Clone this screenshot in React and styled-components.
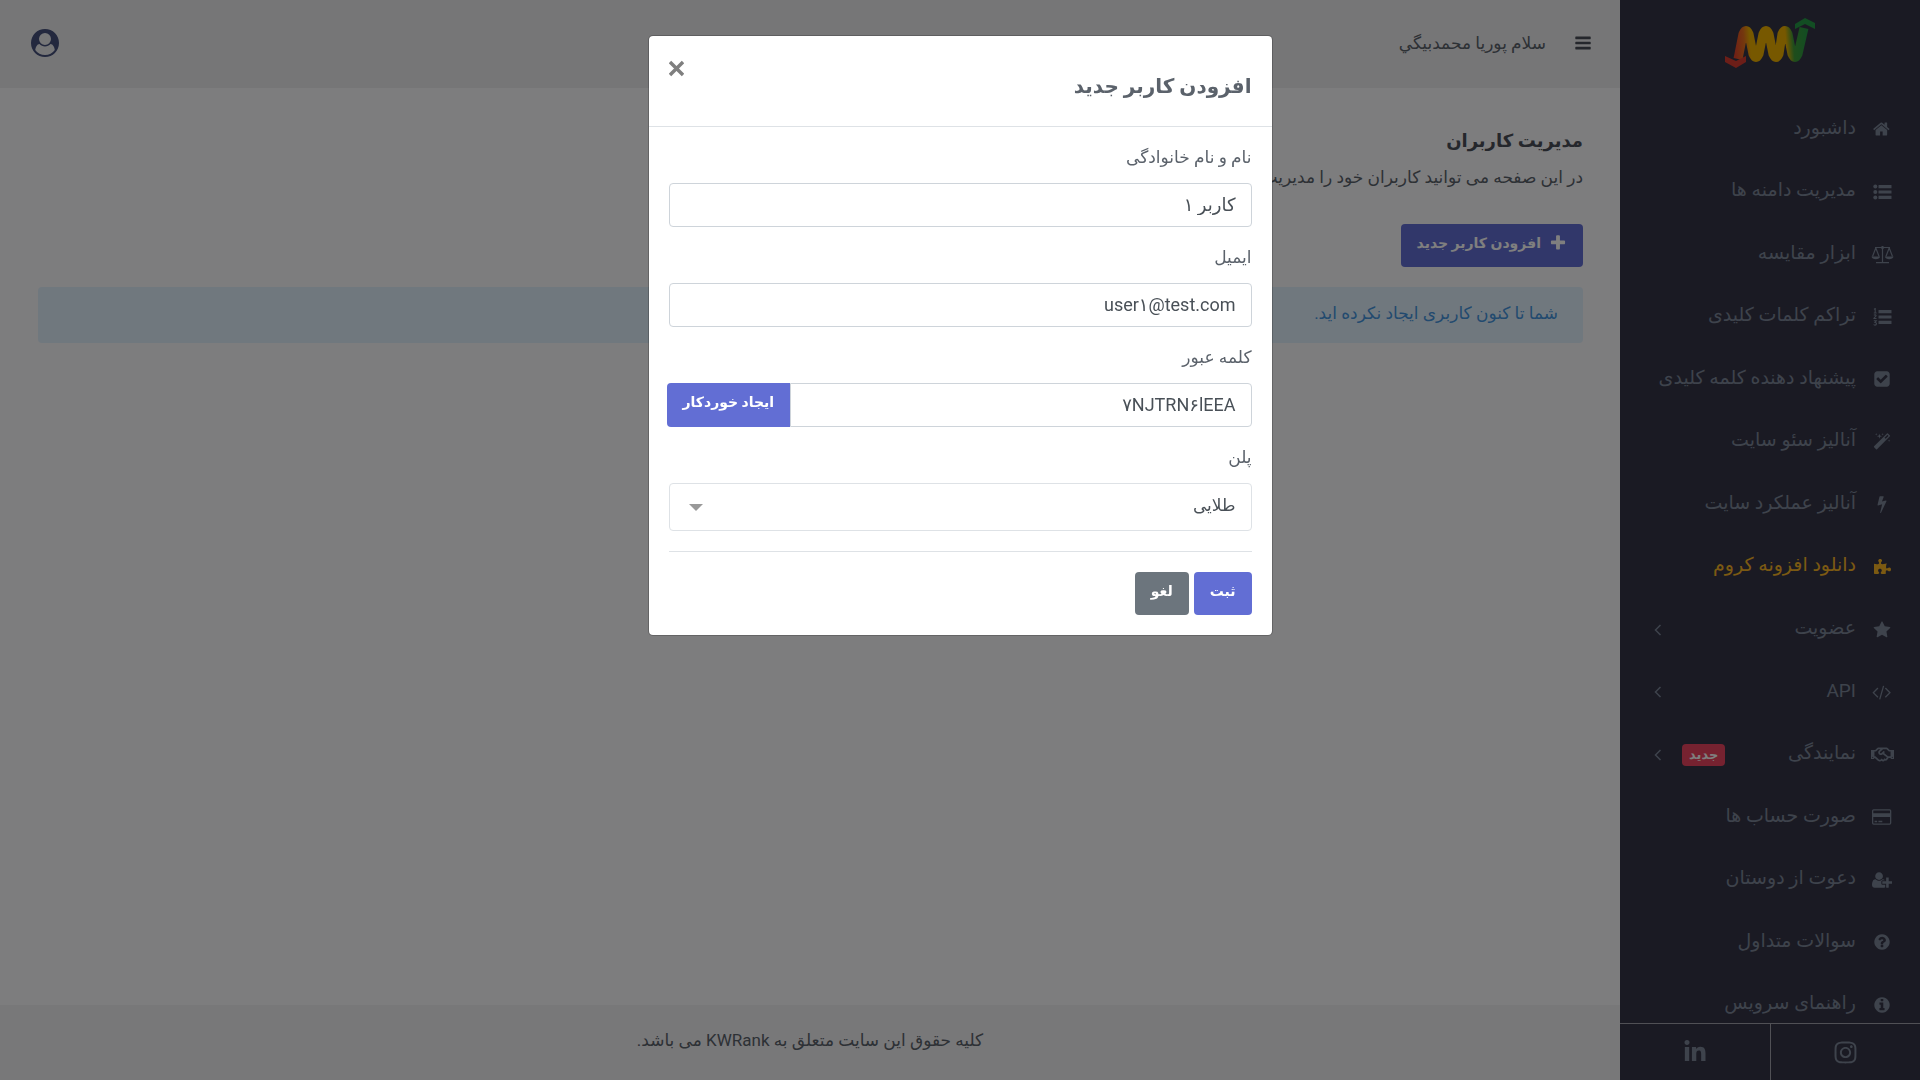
import React, { useState } from 'react'
import styled, { createGlobalStyle } from 'styled-components'
import { FaPuzzlePiece, FaRegHandshake, FaLinkedinIn, FaInstagram } from 'react-icons/fa'

const GlobalStyle = createGlobalStyle`
    * {
        box-sizing: border-box;
    }
    body {
        margin: 0;
        background-color: #fafafd;
        color: #5b626b;
        font-family: Roboto, "DejaVu Sans", sans-serif;
        font-size: 17px;
    }
    input, select, button {
        font-family: inherit;
    }
`;

const Page = styled.div`
    display: flex;
    height: 100vh;
    overflow: hidden;
`;

/* sidebar */
const Sidebar = styled.aside`
    width: 300px;
    flex-shrink: 0;
    display: flex;
    flex-direction: column;
    background-color: #353547;
`;
const LogoLink = styled.a`
    display: flex;
    justify-content: center;
    padding: 16px 0 28px;
`;
const Nav = styled.nav`
    flex: 1;
    min-height: 0;
    overflow: hidden;
`;
const Menu = styled.ul`
    list-style: none;
    margin: 0;
    padding: 0;
    height: 938px;
    display: grid;
    grid-auto-rows: 1fr;
`;
const MenuLink = styled.a`
    display: flex;
    align-items: center;
    height: 100%;
    padding: 0 25px 0 32px;
    font-size: 19px;
    text-decoration: none;
    color: ${(props) => props.$highlight ? "#f8b425" : "#7c8698"};
`;
const MenuText = styled.span`
    padding-bottom: 4px;
`;
const IconSlot = styled.span`
    width: 26px;
    margin-left: 13px;
    display: flex;
    justify-content: center;
`;
const Arrow = styled.svg`
    margin-right: auto;
`;
const Badge = styled.span`
    margin-right: auto;
    padding: 0 7px;
    border-radius: 4px;
    background-color: #ec4561;
    color: white;
    font-size: 13px;
    font-weight: bold;
    line-height: 22px;

    & + svg {
        margin-right: 18px;
    }
`;
const Social = styled.div`
    display: flex;
    height: 57px;
    border-top: 1px solid #a0a0aa;
`;
const SocialLink = styled.a`
    flex: 1;
    display: flex;
    align-items: center;
    justify-content: center;
    color: #7c8698;

    & + & {
        border-right: 1px solid #a0a0aa;
    }
`;

/* content */
const Main = styled.main`
    flex: 1;
    min-width: 0;
    display: flex;
    flex-direction: column;
`;
const Topbar = styled.header`
    height: 88px;
    padding: 0 28px 3px 31px;
    display: flex;
    align-items: center;
    background-color: #ececef;
`;
const IconButton = styled.button`
    display: flex;
    padding: 0;
    border: none;
    background: none;
    color: ${(props) => props.$color};
    cursor: pointer;
`;
const Greeting = styled.span`
    margin-right: 28px;
    margin-left: auto;
    color: #5b626b;
`;
const Content = styled.section`
    flex: 1;
    padding: 35px 37px 35px 38px;
`;
const Title = styled.h1`
    margin: 0;
    font-size: 18px;
    line-height: 36px;
    color: #4b4f58;
`;
const Description = styled.p`
    margin: 0 0 29px;
    line-height: 36px;
`;
const Button = styled.button`
    height: 43px;
    padding: 0 16px 6px;
    border: none;
    border-radius: 4px;
    background-color: ${(props) => props.$secondary ? "#6c757d" : "#626ed4"};
    color: white;
    font-size: 14px;
    font-weight: bold;
    display: flex;
    align-items: center;
    justify-content: center;
    gap: 8px;
    cursor: pointer;
`;
const Alert = styled.div`
    margin-top: 20px;
    padding: 0 25px 4px;
    border-radius: 4px;
    background-color: #e1f0fd;
    color: #4595de;
    line-height: 52px;
`;
const Footer = styled.footer`
    height: 75px;
    line-height: 70px;
    text-align: center;
    background-color: #f0f0f3;
`;

/* modal */
const Backdrop = styled.div`
    position: fixed;
    inset: 0;
    padding: 35px 0;
    display: flex;
    justify-content: center;
    align-items: flex-start;
    background-color: rgba(0, 0, 0, 0.5);
`;
const Modal = styled.div`
    width: 625px;
    border: 1px solid rgba(0, 0, 0, 0.2);
    border-radius: 5px;
    background-color: white;
    background-clip: padding-box;
`;
const ModalHeader = styled.div`
    display: flex;
    align-items: flex-start;
    justify-content: space-between;
    padding: 24px 20px 22px;
    border-bottom: 1px solid #dee2e6;
`;
const ModalTitle = styled.h2`
    margin: 8px 0 0;
    font-size: 20px;
    line-height: 36px;
`;
const ModalBody = styled.form`
    padding: 12px 20px 20px;
`;
const Field = styled.div`
    margin-bottom: 12px;
`;
const Label = styled.label`
    display: block;
    margin-bottom: 8px;
    line-height: 36px;
`;
const Input = styled.input`
    width: 100%;
    height: 44px;
    padding: 0 15px 2px;
    border: 1px solid #ced4da;
    border-radius: 4px;
    background-color: white;
    color: #495057;
    font-size: 18px;
`;
const InputGroup = styled.div`
    display: flex;
    margin-left: -2px;

    input {
        flex: 1;
        min-width: 0;
        border-radius: 0 4px 4px 0;
    }
    button {
        height: 44px;
        border-radius: 4px 0 0 4px;
    }
`;
const SelectBox = styled.div`
    display: grid;
    align-items: center;

    & > * {
        grid-area: 1 / 1;
    }
    svg {
        justify-self: end;
        margin-left: 20px;
        pointer-events: none;
    }
`;
const Select = styled.select`
    appearance: none;
    width: 100%;
    height: 48px;
    padding: 0 15px 4px;
    border: 1px solid #dee2e6;
    border-radius: 4px;
    background-color: white;
    color: #495057;
    font-size: 17px;
`;
const Actions = styled.div`
    display: flex;
    gap: 5px;
    margin-top: 20px;
    padding-top: 20px;
    border-top: 1px solid #dee2e6;
`;

const paths = {
    home: "M1408 992v480q0 26-19 45t-45 19h-384v-384h-256v384h-384q-26 0-45-19t-19-45v-480q0-1 .5-3t.5-3l575-474 575 474q1 2 1 6zm223-69l-62 74q-8 9-21 11h-3q-13 0-21-7l-692-577-692 577q-12 8-24 7-13-2-21-11l-62-74q-8-10-7-23.5t11-21.5l719-599q32-26 76-26t76 26l244 204v-195q0-14 9-23t23-9h192q14 0 23 9t9 23v408l219 182q10 8 11 21.5t-7 23.5z",
    check: "M813 1299l614-614q19-19 19-45t-19-45l-102-102q-19-19-45-19t-45 19l-467 467-211-211q-19-19-45-19t-45 19l-102 102q-19 19-19 45t19 45l358 358q19 19 45 19t45-19zm851-883v960q0 119-84.5 203.5t-203.5 84.5h-960q-119 0-203.5-84.5t-84.5-203.5v-960q0-119 84.5-203.5t203.5-84.5h960q119 0 203.5 84.5t84.5 203.5z",
    magic: "M1254 581l293-293-107-107-293 293zm447-293q0 27-18 45l-1286 1286q-18 18-45 18t-45-18l-198-198q-18-18-18-45t18-45l1286-1286q18-18 45-18t45 18l198 198q18 18 18 45zm-1351-190l98 30-98 30-30 98-30-98-98-30 98-30 30-98zm350 162l196 60-196 60-60 196-60-196-196-60 196-60 60-196zm930 478l98 30-98 30-30 98-30-98-98-30 98-30 30-98zm-640-640l98 30-98 30-30 98-30-98-98-30 98-30 30-98z",
    bolt: "M1333 566q18 20 7 44l-540 1157q-13 25-42 25-4 0-14-2-17-5-25.5-19t-4.5-30l197-808-406 101q-4 1-12 1-18 0-31-11-18-15-13-39l201-825q4-14 16-23t28-9h328q19 0 32 12.5t13 29.5q0 8-5 18l-171 463 396-98q8-2 12-2 19 0 34 15z",
    star: "M1728 647q0 22-26 48l-363 354 86 500q1 7 1 20 0 21-10.5 35.5t-30.5 14.5q-19 0-40-12l-449-236-449 236q-22 12-40 12-21 0-31.5-14.5t-10.5-35.5q0-6 2-20l86-500-364-354q-25-27-25-48 0-37 56-46l502-73 225-455q19-41 49-41t49 41l225 455 502 73q56 9 56 46z",
    code: "M617 1399l-50 50q-10 10-23 10t-23-10l-466-466q-10-10-10-23t10-23l466-466q10-10 23-10t23 10l50 50q10 10 10 23t-10 23l-393 393 393 393q10 10 10 23t-10 23zm591-1067l-373 1291q-4 13-15.5 19.5t-23.5 2.5l-62-17q-13-4-19.5-15.5t-2.5-24.5l373-1291q4-13 15.5-19.5t23.5-2.5l62 17q13 4 19.5 15.5t2.5 24.5zm657 651l-466 466q-10 10-23 10t-23-10l-50-50q-10-10-10-23t10-23l393-393-393-393q-10-10-10-23t10-23l50-50q10-10 23-10t23 10l466 466q10 10 10 23t-10 23z",
    card: "M1760 128q66 0 113 47t47 113v1216q0 66-47 113t-113 47h-1600q-66 0-113-47t-47-113v-1216q0-66 47-113t113-47h1600zm-1600 128q-13 0-22.5 9.5t-9.5 22.5v224h1664v-224q0-13-9.5-22.5t-22.5-9.5h-1600zm1600 1280q13 0 22.5-9.5t9.5-22.5v-608h-1664v608q0 13 9.5 22.5t22.5 9.5h1600zm-1504-128v-128h256v128h-256zm384 0v-128h384v128h-384z",
    userPlus: "M704 896q-159 0-271.5-112.5t-112.5-271.5 112.5-271.5 271.5-112.5 271.5 112.5 112.5 271.5-112.5 271.5-271.5 112.5zm960 128h352q13 0 22.5 9.5t9.5 22.5v192q0 13-9.5 22.5t-22.5 9.5h-352v352q0 13-9.5 22.5t-22.5 9.5h-192q-13 0-22.5-9.5t-9.5-22.5v-352h-352q-13 0-22.5-9.5t-9.5-22.5v-192q0-13 9.5-22.5t22.5-9.5h352v-352q0-13 9.5-22.5t22.5-9.5h192q13 0 22.5 9.5t9.5 22.5v352zm-736 224q0 52 38 90t90 38h256v238q-68 50-171 50h-874q-121 0-194-69t-73-190q0-53 3.5-103.5t14-109 26.5-108.5 43-97.5 62-81 85.5-53.5 111.5-20q19 0 39 17 79 61 154.5 91.5t164.5 30.5 164.5-30.5 154.5-91.5q20-17 39-17 132 0 217 96h-223q-52 0-90 38t-38 90v192z",
    question: "M1024 1376v-192q0-14-9-23t-23-9h-192q-14 0-23 9t-9 23v192q0 14 9 23t23 9h192q14 0 23-9t9-23zm256-672q0-88-55.5-163t-138.5-116-170-41q-243 0-371 213-15 24 8 42l132 100q7 6 19 6 16 0 25-12 53-68 86-92 34-24 86-24 48 0 85.5 26t37.5 59q0 38-20 61t-68 45q-63 28-115.5 86.5t-52.5 125.5v36q0 14 9 23t23 9h192q14 0 23-9t9-23q0-19 21.5-49.5t54.5-49.5q32-18 49-28.5t46-35 44.5-48 28-60.5 12.5-81zm384 192q0 209-103 385.5t-279.5 279.5-385.5 103-385.5-103-279.5-279.5-103-385.5 103-385.5 279.5-279.5 385.5-103 385.5 103 279.5 279.5 103 385.5z",
    info: "M1152 1376v-160q0-14-9-23t-23-9h-96v-512q0-14-9-23t-23-9h-320q-14 0-23 9t-9 23v160q0 14 9 23t23 9h96v320h-96q-14 0-23 9t-9 23v160q0 14 9 23t23 9h448q14 0 23-9t9-23zm-128-896v-160q0-14-9-23t-23-9h-192q-14 0-23 9t-9 23v160q0 14 9 23t23 9h192q14 0 23-9t9-23zm640 416q0 209-103 385.5t-279.5 279.5-385.5 103-385.5-103-279.5-279.5-103-385.5 103-385.5 279.5-279.5 385.5-103 385.5 103 279.5 279.5 103 385.5z",
    bars: "M1664 1344v128q0 26-19 45t-45 19h-1408q-26 0-45-19t-19-45v-128q0-26 19-45t45-19h1408q26 0 45 19t19 45zm0-512v128q0 26-19 45t-45 19h-1408q-26 0-45-19t-19-45v-128q0-26 19-45t45-19h1408q26 0 45 19t19 45zm0-512v128q0 26-19 45t-45 19h-1408q-26 0-45-19t-19-45v-128q0-26 19-45t45-19h1408q26 0 45 19t19 45z",
    plus: "M1600 736v192q0 40-28 68t-68 28h-416v416q0 40-28 68t-68 28h-192q-40 0-68-28t-28-68v-416h-416q-40 0-68-28t-28-68v-192q0-40 28-68t68-28h416v-416q0-40 28-68t68-28h192q40 0 68 28t28 68v416h416q40 0 68 28t28 68z",
    user: "M1523 1339q-22-155-87.5-257.5t-184.5-118.5q-67 74-159.5 115.5t-195.5 41.5-195.5-41.5-159.5-115.5q-119 16-184.5 118.5t-87.5 257.5q106 150 271 237.5t356 87.5 356-87.5 271-237.5zm-243-699q0-159-112.5-271.5t-271.5-112.5-271.5 112.5-112.5 271.5 112.5 271.5 271.5 112.5 271.5-112.5 112.5-271.5zm512 256q0 182-71 347.5t-190.5 286-285.5 191.5-349 71q-182 0-348-71t-286-191-191-286-71-348 71-348 191-286 286-191 348-71 348 71 286 191 191 286 71 348z"
}

function Icon({ name, size = 18, width = 1792 }) {
    return (
        <svg height={size} width={size * width / 1792} viewBox={`0 0 ${width} 1792`} fill="currentColor" aria-hidden="true">
            <path d={paths[name]} />
        </svg>
    )
}

function List({ ordered }) {
    return (
        <svg width="19" height="18" viewBox="0 0 19 18" fill="currentColor" aria-hidden="true">
            <rect x="5.5" y="2" width="13" height="3.2" rx="0.3" />
            <rect x="5.5" y="7.4" width="13" height="3.2" rx="0.3" />
            <rect x="5.5" y="12.8" width="13" height="3.2" rx="0.3" />
            {ordered ? (
                <path d="M1 1.4l1.2-.9V5M.8 5h2.8M.9 7.4c.8-1 2.4-.6 2.1.5-.2.8-1.8 1.2-2.1 2.6h2.6M.8 12.8h2.5l-1.3 1.7c2 0 1.9 2.6 0 2.6-.6 0-1.1-.2-1.4-.6" fill="none" stroke="currentColor" strokeWidth="1.1" />
            ) : (
                <>
                    <circle cx="2.3" cy="3.6" r="2" />
                    <circle cx="2.3" cy="9" r="2" />
                    <circle cx="2.3" cy="14.4" r="2" />
                </>
            )}
        </svg>
    )
}

function Scale() {
    return (
        <svg width="23" height="19" viewBox="0 0 23 19" fill="none" stroke="currentColor" strokeWidth="1.2" aria-hidden="true">
            <path d="M4 2.5h15M11.5 1v16.5M5 17.7h13M4.8 3L1.5 11.5M4.8 3l3.3 8.5M18.2 3l-3.3 8.5M18.2 3l3.3 8.5" />
            <path d="M.5 11.5h8.6c-.4 3.6-8.2 3.6-8.6 0zM13.9 11.5h8.6c-.4 3.6-8.2 3.6-8.6 0z" fill="currentColor" stroke="none" />
            <circle cx="11.5" cy="2.5" r="1.5" fill="currentColor" stroke="none" />
        </svg>
    )
}

function Logo() {
    return (
        <svg width="92" height="54" viewBox="0 0 92 54" fill="none" aria-label="KWRank">
            <defs>
                <linearGradient id="wave" gradientUnits="userSpaceOnUse" x1="10" y1="30" x2="84" y2="24">
                    <stop offset="0" stopColor="#e2402c" />
                    <stop offset="0.14" stopColor="#e8701c" />
                    <stop offset="0.22" stopColor="#efb000" />
                    <stop offset="0.7" stopColor="#efb000" />
                    <stop offset="0.8" stopColor="#3f9a38" />
                    <stop offset="1" stopColor="#259a46" />
                </linearGradient>
            </defs>
            <path d="M14 43L19 18Q22 11 25 18L29 38Q32 45 35 38L39 18Q42 11 45 18L49 38Q52 45 55 38L58 18Q61 11 64 18L68 38Q71 45 74 38L80 12" stroke="url(#wave)" strokeWidth="9" strokeLinejoin="round" />
            <path d="M1 40l11 5 10-5v6l-10 6-11-6z" fill="#d93c30" />
            <path d="M71 8l10-6 10 5v6l-10-5-10 5z" fill="#259a46" />
        </svg>
    )
}

const items = [
    { text: "داشبورد", icon: <Icon name="home" /> },
    { text: "مدیریت دامنه ها", icon: <List /> },
    { text: "ابزار مقایسه", icon: <Scale /> },
    { text: "تراکم کلمات کلیدی", icon: <List ordered /> },
    { text: "پیشنهاد دهنده کلمه کلیدی", icon: <Icon name="check" /> },
    { text: "آنالیز سئو سایت", icon: <Icon name="magic" /> },
    { text: "آنالیز عملکرد سایت", icon: <Icon name="bolt" /> },
    { text: "دانلود افزونه کروم", icon: <FaPuzzlePiece size={17} />, highlight: true },
    { text: "عضویت", icon: <Icon name="star" />, arrow: true },
    { text: "API", icon: <Icon name="code" width={1920} />, arrow: true },
    { text: "نمایندگی", icon: <FaRegHandshake size={23} />, arrow: true, badge: "جدید" },
    { text: "صورت حساب ها", icon: <Icon name="card" width={1920} /> },
    { text: "دعوت از دوستان", icon: <Icon name="userPlus" width={2048} /> },
    { text: "سوالات متداول", icon: <Icon name="question" /> },
    { text: "راهنمای سرویس", icon: <Icon name="info" /> }
]

export default function App() {
    const [open, setOpen] = useState(true);
    return (
        <>
            <GlobalStyle />
            <Page dir="rtl" lang="fa">
                <Sidebar>
                    <LogoLink href="#">
                        <Logo />
                    </LogoLink>
                    <Nav>
                        <Menu>
                            {items.map((item) => (
                                <li key={item.text}>
                                    <MenuLink href="#" $highlight={item.highlight}>
                                        <IconSlot>{item.icon}</IconSlot>
                                        <MenuText>{item.text}</MenuText>
                                        {item.badge && <Badge>{item.badge}</Badge>}
                                        {item.arrow && (
                                            <Arrow width="12" height="12" viewBox="0 0 12 12" fill="none" stroke="currentColor" strokeWidth="1.5">
                                                <path d="M8.5 1L3.5 6l5 5" />
                                            </Arrow>
                                        )}
                                    </MenuLink>
                                </li>
                            ))}
                        </Menu>
                    </Nav>
                    <Social>
                        <SocialLink href="#" aria-label="Instagram">
                            <FaInstagram size={25} />
                        </SocialLink>
                        <SocialLink href="#" aria-label="LinkedIn">
                            <FaLinkedinIn size={24} />
                        </SocialLink>
                    </Social>
                </Sidebar>
                <Main>
                    <Topbar>
                        <IconButton $color="#4b4f58" aria-label="منو">
                            <Icon name="bars" />
                        </IconButton>
                        <Greeting>سلام پوریا محمدبیگي</Greeting>
                        <IconButton $color="#46507c" aria-label="حساب کاربری">
                            <Icon name="user" size={28} />
                        </IconButton>
                    </Topbar>
                    <Content>
                        <Title>مدیریت کاربران</Title>
                        <Description>در این صفحه می توانید کاربران خود را مدیریت کنید.</Description>
                        <Button onClick={() => setOpen(true)}>
                            <Icon name="plus" />
                            افزودن کاربر جدید
                        </Button>
                        <Alert>شما تا کنون کاربری ایجاد نکرده اید.</Alert>
                    </Content>
                    <Footer>کلیه حقوق این سایت متعلق به KWRank می باشد.</Footer>
                </Main>
            </Page>
            {open && (
                <Backdrop dir="rtl" lang="fa">
                    <Modal role="dialog" aria-labelledby="modal-title">
                        <ModalHeader>
                            <ModalTitle id="modal-title">افزودن کاربر جدید</ModalTitle>
                            <IconButton $color="#7f7f7f" aria-label="بستن" onClick={() => setOpen(false)}>
                                <svg width="15" height="17" viewBox="0 0 15 17" fill="none" stroke="currentColor" strokeWidth="3.4">
                                    <path d="M1 2l13 13M14 2L1 15" />
                                </svg>
                            </IconButton>
                        </ModalHeader>
                        <ModalBody onSubmit={(e) => e.preventDefault()}>
                            <Field>
                                <Label htmlFor="name">نام و نام خانوادگی</Label>
                                <Input id="name" defaultValue="کاربر ۱" />
                            </Field>
                            <Field>
                                <Label htmlFor="email">ایمیل</Label>
                                <Input id="email" defaultValue="user۱@test.com" />
                            </Field>
                            <Field>
                                <Label htmlFor="password">کلمه عبور</Label>
                                <InputGroup>
                                    <Input id="password" defaultValue="۷NJTRN۶lEEA" />
                                    <Button type="button">ایجاد خوردکار</Button>
                                </InputGroup>
                            </Field>
                            <Field>
                                <Label htmlFor="plan">پلن</Label>
                                <SelectBox>
                                    <Select id="plan" defaultValue="gold">
                                        <option value="gold">طلایی</option>
                                    </Select>
                                    <svg width="14" height="7" viewBox="0 0 14 7" fill="#999">
                                        <path d="M0 0h14L7 7z" />
                                    </svg>
                                </SelectBox>
                            </Field>
                            <Actions>
                                <Button type="submit">ثبت</Button>
                                <Button type="button" $secondary onClick={() => setOpen(false)}>لغو</Button>
                            </Actions>
                        </ModalBody>
                    </Modal>
                </Backdrop>
            )}
        </>
    )
}
